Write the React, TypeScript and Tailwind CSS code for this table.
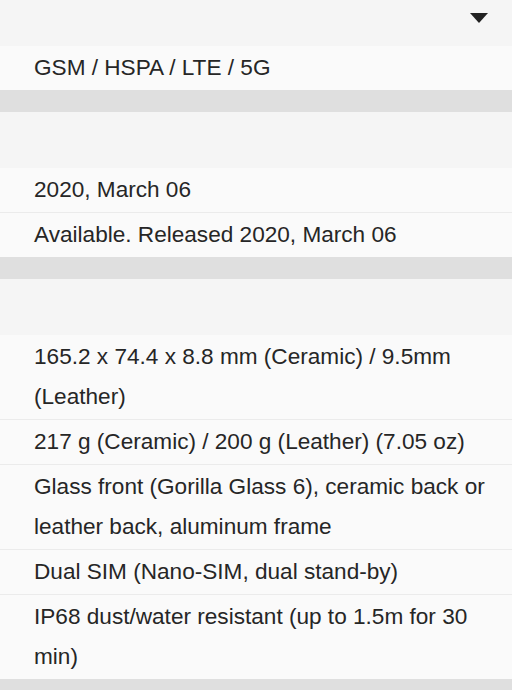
import React from 'react';

interface SpecSection {
  id: string;
  rows: string[];
  collapsible?: boolean;
}

const sections: SpecSection[] = [
  { id: 'network', rows: ['GSM / HSPA / LTE / 5G'], collapsible: true },
  { id: 'launch', rows: ['2020, March 06', 'Available. Released 2020, March 06'] },
  {
    id: 'body',
    rows: [
      '165.2 x 74.4 x 8.8 mm (Ceramic) / 9.5mm (Leather)',
      '217 g (Ceramic) / 200 g (Leather) (7.05 oz)',
      'Glass front (Gorilla Glass 6), ceramic back or leather back, aluminum frame',
      'Dual SIM (Nano-SIM, dual stand-by)',
      'IP68 dust/water resistant (up to 1.5m for 30 min)',
    ],
  },
];

const Caret: React.FC = () => (
  <svg width="18" height="10" viewBox="0 0 18 10" className="block">
    <polygon points="0,0 18,0 9,10" fill="#222" />
  </svg>
);

const App: React.FC = () => {
  return (
    <div
      className="w-[512px] h-[690px] overflow-hidden bg-[#fafafa] text-[#262626]"
      style={{ fontFamily: '"Liberation Sans", Arial, sans-serif' }}
    >
      {/* page is scrolled a little: the first header is cut at the top */}
      <div className="-mt-[10px]">
        {sections.map(section => (
          <div key={section.id}>
            <div className="h-[56px] bg-[#f5f5f5] flex items-center justify-end pr-[24px]">
              {section.collapsible && <Caret />}
            </div>
            <div>
              {section.rows.map((row, i) => (
                <div
                  key={i}
                  className="bg-[#fafafa] pl-[34px] pr-[10px] py-[2px] text-[22.6px] leading-[40px] border-b border-[#ebebeb] last:border-b-0"
                >
                  {row}
                </div>
              ))}
            </div>
            <div className="h-[22px] bg-[#dfdfdf]" />
          </div>
        ))}
      </div>
    </div>
  );
};

export default App;
